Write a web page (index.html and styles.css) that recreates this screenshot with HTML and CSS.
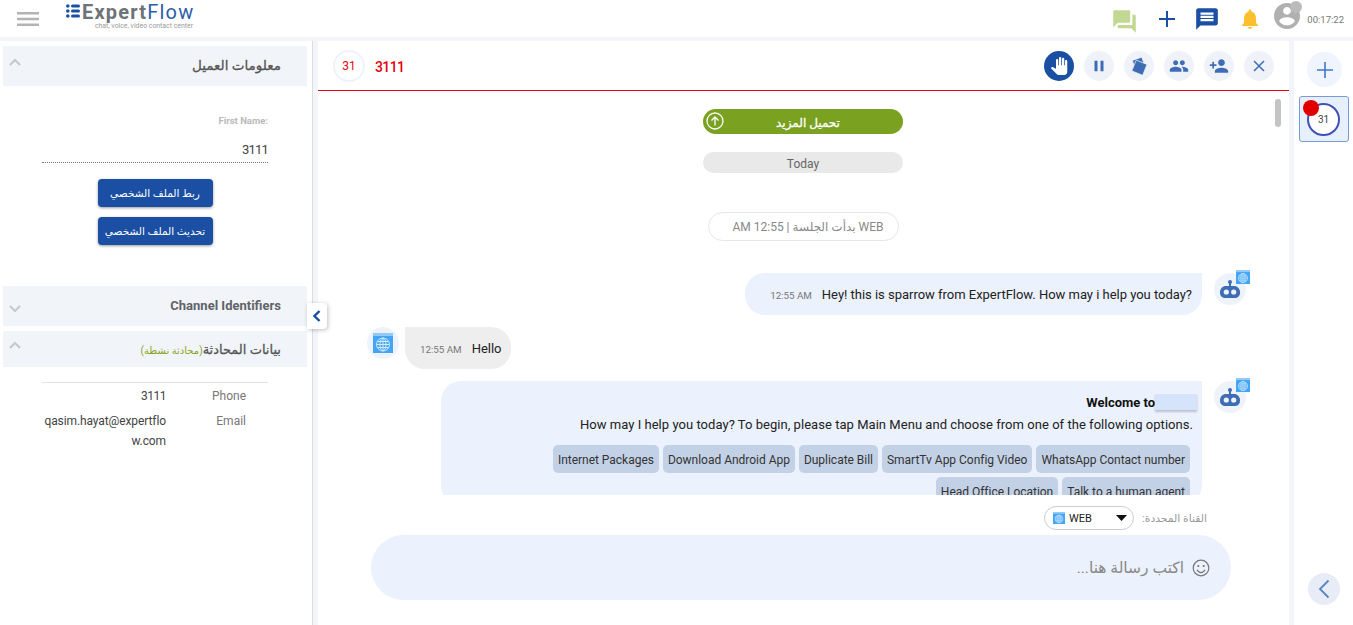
FILE: index.html
```html
<!DOCTYPE html>
<html lang="ar">
<head>
<meta charset="utf-8">
<title>ExpertFlow</title>
<link rel="stylesheet" href="styles.css">
</head>
<body>
<svg class="defs" width="0" height="0" aria-hidden="true">
  <symbol id="web" viewBox="0 0 20 20">
    <rect width="20" height="20" fill="#42a5f5"/>
    <rect width="20" height="3" fill="#90caf9"/>
    <g fill="none" stroke="#cfe8fd" stroke-width="1">
      <circle cx="10" cy="11.5" r="6.5"/>
      <ellipse cx="10" cy="11.5" rx="3" ry="6.5"/>
      <path d="M10 5v13M3.5 11.5h13M4.5 8.5h11M4.5 14.500h11"/>
    </g>
  </symbol>
  <symbol id="robot" viewBox="0 0 20 18">
    <circle cx="10" cy="2" r="2"/>
    <rect x="9" y="2" width="2" height="5"/>
    <path d="M6 6h8c3.300 0 6 2.700 6 6v1c0 2.800-2.200 5-5 5H5c-2.800 0-5-2.200-5-5v-1c0-3.300 2.700-6 6-6z"/>
    <circle cx="6.300" cy="12" r="2.600" fill="#eef3fb"/>
    <circle cx="13.700" cy="12" r="2.600" fill="#eef3fb"/>
  </symbol>
</svg>

<header class="topbar">
  <svg class="menu-icon" viewBox="0 0 22 14" width="22" height="14"><path d="M0 0h22v2.500H0zM0 5.800h22v2.500H0zM0 11.500h22V14H0z"/></svg>
  <div class="logo">
    <div class="logo-main">
      <svg class="logo-dots" viewBox="0 0 14 14" width="14" height="14"><circle cx="1.800" cy="2" r="1.800"/><circle cx="1.800" cy="7" r="1.800"/><circle cx="1.800" cy="12" r="1.800"/><rect x="5" y=".5" width="9" height="3" rx="1.500"/><rect x="5" y="5.500" width="9" height="3" rx="1.500"/><rect x="5" y="10.500" width="9" height="3" rx="1.500"/></svg>
      <span class="logo-text"><span class="logo-grey">Expert</span><span class="logo-blue">Flow</span></span>
    </div>
    <div class="logo-tag">chat, voice, video contact center</div>
  </div>
  <div class="top-actions">
    <svg class="ic-forum" viewBox="0 0 24 24" width="27" height="27"><path d="M21 6h-2v9H6v2c0 .55.45 1 1 1h11l4 4V7c0-.55-.45-1-1-1zm-4 6V3c0-.55-.45-1-1-1H3c-.55 0-1 .45-1 1v14l4-4h10c.55 0 1-.45 1-1z"/></svg>
    <svg class="ic-plus" viewBox="0 0 16 16" width="16" height="16"><path d="M7 0h2v7h7v2H9v7H7V9H0V7h7z"/></svg>
    <svg class="ic-chat" viewBox="0 0 24 24" width="26" height="26"><path d="M20 2H4c-1.100 0-1.990.9-1.990 2L2 22l4-4h14c1.100 0 2-.9 2-2V4c0-1.100-.9-2-2-2zM18 14H6v-2h12v2zm0-3H6V9h12v2zm0-3H6V6h12v2z"/></svg>
    <svg class="ic-bell" viewBox="0 0 24 24" width="24" height="24"><path d="M12 22c1.100 0 2-.9 2-2h-4c0 1.100.89 2 2 2zm6-6v-5c0-3.070-1.640-5.640-4.500-6.320V4c0-.83-.67-1.500-1.500-1.500s-1.500.67-1.500 1.500v.68C7.630 5.360 6 7.920 6 11v5l-2 2v1h16v-1l-2-2z"/></svg>
    <div class="profile">
      <svg class="ic-user" viewBox="2 2 20 20" width="26" height="26"><path d="M12 2C6.480 2 2 6.480 2 12s4.480 10 10 10 10-4.480 10-10S17.520 2 12 2zm0 3c1.660 0 3 1.340 3 3s-1.340 3-3 3-3-1.340-3-3 1.340-3 3-3zm0 14.200c-2.500 0-4.710-1.280-6-3.220.03-1.990 4-3.080 6-3.080 1.990 0 5.970 1.090 6 3.080-1.290 1.940-3.500 3.220-6 3.220z"/></svg>
      <span class="status-dot"></span>
    </div>
    <span class="clock">00:17:22</span>
  </div>
</header>

<div class="layout">
  <aside class="left">
    <section class="acc-head acc-first">
      <svg class="chev" viewBox="0 0 12 8" width="12" height="8"><path d="M1 7l5-5 5 5"/></svg>
      <h2>معلومات العميل</h2>
    </section>
    <div class="form">
      <div class="form-label">First Name:</div>
      <div class="form-value">3111</div>
      <button class="btn">ربط الملف الشخصي</button>
      <button class="btn">تحديث الملف الشخصي</button>
    </div>
    <section class="acc-head">
      <svg class="chev chev-down" viewBox="0 0 12 8" width="12" height="8"><path d="M1 1l5 5 5-5"/></svg>
      <h2 class="h-en">Channel Identifiers</h2>
    </section>
    <section class="acc-head acc-chat">
      <svg class="chev" viewBox="0 0 12 8" width="12" height="8"><path d="M1 7l5-5 5 5"/></svg>
      <h2>بيانات المحادثة<small>(محادثة نشطة)</small></h2>
    </section>
    <div class="info">
      <div class="info-row"><span class="info-val info-num">3111</span><span class="info-key">Phone</span></div>
      <div class="info-row"><span class="info-val">qasim.hayat@expertflow.com</span><span class="info-key">Email</span></div>
    </div>
    <button class="collapse" aria-label="collapse"><svg viewBox="0 0 8 12" width="8" height="12"><path d="M6.500 1L1.500 6l5 5"/></svg></button>
  </aside>

  <main class="center">
    <div class="chat-head">
      <div class="head-avatar">31</div>
      <div class="head-name">3111</div>
      <div class="head-actions">
        <span class="act act-hand"><svg viewBox="0 0 24 24" width="18" height="18"><path d="M23 5.500V20c0 2.200-1.800 4-4 4h-7.300c-1.080 0-2.100-.43-2.850-1.190L1 14.830s1.260-1.230 1.300-1.250c.22-.19.49-.29.79-.29.22 0 .42.06.6.16.04.01 4.310 2.460 4.310 2.460V4c0-.83.67-1.500 1.500-1.500S11 3.170 11 4v7h1V1.500c0-.83.67-1.500 1.500-1.500S15 .67 15 1.500V11h1V2.500c0-.83.67-1.500 1.500-1.500s1.500.67 1.500 1.500V11h1V5.500c0-.83.67-1.500 1.500-1.500s1.500.67 1.500 1.500z"/></svg></span>
        <span class="act"><svg viewBox="0 0 24 24" width="18" height="18"><path d="M6 19h4V5H6v14zm8-14v14h4V5h-4z"/></svg></span>
        <span class="act"><svg class="notes" viewBox="0 0 24 24" width="20" height="20"><rect x="6" y="3" width="12" height="13" rx="1" transform="rotate(-20 12 10)"/><rect x="5.500" y="7" width="14" height="14" rx="1" transform="rotate(22 12.500 14)"/></svg></span>
        <span class="act"><svg viewBox="0 0 24 24" width="20" height="20"><path d="M16 11c1.660 0 2.990-1.340 2.990-3S17.660 5 16 5c-1.660 0-3 1.340-3 3s1.340 3 3 3zm-8 0c1.660 0 2.990-1.340 2.990-3S9.660 5 8 5C6.340 5 5 6.340 5 8s1.340 3 3 3zm0 2c-2.330 0-7 1.170-7 3.500V19h14v-2.500c0-2.330-4.670-3.500-7-3.500zm8 0c-.29 0-.62.02-.97.05 1.160.84 1.970 1.970 1.970 3.450V19h6v-2.500c0-2.330-4.670-3.500-7-3.500z"/></svg></span>
        <span class="act"><svg viewBox="0 0 24 24" width="20" height="20"><path d="M15 12c2.210 0 4-1.790 4-4s-1.790-4-4-4-4 1.790-4 4 1.790 4 4 4zm-9-2V7H4v3H1v2h3v3h2v-3h3v-2H6zm9 4c-2.670 0-8 1.340-8 4v2h16v-2c0-2.660-5.330-4-8-4z"/></svg></span>
        <span class="act"><svg class="stroke" viewBox="0 0 12 12" width="12" height="12"><path d="M1 1l10 10M11 1L1 11"/></svg></span>
      </div>
    </div>

    <div class="messages">
      <span class="scroll-thumb"></span>
      <div class="load-more">
        <svg viewBox="0 0 18 18" width="18" height="18"><circle cx="9" cy="9" r="8"/><path d="M9 13.500V5M5.500 8.500L9 5l3.500 3.500"/></svg>
        <span>تحميل المزيد</span>
      </div>
      <div class="today">Today</div>
      <div class="session">AM 12:55 | بدأت الجلسة WEB</div>

      <div class="row row-bot row-hey">
        <div class="bubble bubble-bot">
          <span class="time">12:55 AM</span><span class="text">Hey! this is sparrow from ExpertFlow. How may i help you today?</span>
        </div>
        <div class="avatar"><svg class="robot"><use href="#robot"/></svg><svg class="badge"><use href="#web"/></svg></div>
      </div>

      <div class="row row-user">
        <div class="avatar"><svg class="web-big"><use href="#web"/></svg></div>
        <div class="bubble bubble-user">
          <span class="time">12:55 AM</span><span class="text">Hello</span>
        </div>
      </div>

      <div class="row row-bot row-menu">
        <div class="bubble bubble-bot bubble-menu">
          <div class="welcome"><strong>Welcome to</strong><span class="blank"></span></div>
          <div class="intro">How may I help you today? To begin, please tap Main Menu and choose from one of the following options.</div>
          <div class="options">
            <span class="opt">Internet Packages</span>
            <span class="opt">Download Android App</span>
            <span class="opt">Duplicate Bill</span>
            <span class="opt">SmartTv App Config Video</span>
            <span class="opt">WhatsApp Contact number</span>
            <span class="opt">Head Office Location</span>
            <span class="opt">Talk to a human agent</span>
          </div>
        </div>
        <div class="avatar"><svg class="robot"><use href="#robot"/></svg><svg class="badge"><use href="#web"/></svg></div>
      </div>
    </div>

    <div class="channel">
      <div class="select">
        <svg class="select-web"><use href="#web"/></svg>
        <span class="select-text">WEB</span>
        <svg class="caret" viewBox="0 0 11 6" width="11" height="6"><path d="M0 0h11L5.500 6z"/></svg>
      </div>
      <span class="channel-label">:القناة المحددة</span>
    </div>

    <div class="composer">
      <span class="placeholder">اكتب رسالة هنا...</span>
      <svg class="smile" viewBox="0 0 18 18" width="18" height="18"><circle cx="9" cy="9" r="7.800"/><circle cx="6.300" cy="7" r="1.100" class="eye"/><circle cx="11.700" cy="7" r="1.100" class="eye"/><path d="M5 10.800c1 2 2.500 2.800 4 2.800s3-.8 4-2.800"/></svg>
    </div>
  </main>

  <aside class="right">
    <button class="add-chat" aria-label="add"><svg viewBox="0 0 16 16" width="16" height="16"><path d="M7.200 0h1.600v7.200H16v1.600H8.800V16H7.200V8.800H0V7.200h7.200z"/></svg></button>
    <div class="chat-card">
      <span class="card-ring">31</span>
      <span class="card-dot"></span>
    </div>
    <button class="side-back" aria-label="back"><svg viewBox="0 0 12 20" width="12" height="20"><path d="M10.500 1.500L2 10l8.500 8.500"/></svg></button>
  </aside>
</div>
</body>
</html>
```

FILE: styles.css
```css
* { box-sizing: border-box; }
html, body { margin: 0; height: 625px; overflow: hidden; }
body { font-family: Roboto, "DejaVu Sans", sans-serif; background: #fff; color: #222; }
.defs { position: absolute; }
button { font-family: inherit; border: 0; padding: 0; cursor: pointer; }

.topbar { height: 37px; display: flex; align-items: flex-start; background: #fff; }
.menu-icon { fill: #b3b3b3; margin: 12px 0 0 17px; flex: none; }
.logo { margin-left: 27px; width: 128px; }
.logo-main { display: flex; align-items: flex-start; height: 22px; }
.logo-dots { fill: #1a4fa3; margin-top: 4px; flex: none; }
.logo-text { font-size: 20px; line-height: 24px; letter-spacing: 1.200px; margin-left: 2px; white-space: nowrap; }
.logo-grey { color: #6e7378; font-weight: 700; }
.logo-blue { color: #2c5ea8; font-weight: 400; }
.logo-tag { font-size: 6.900px; line-height: 9px; color: #9a9a9a; text-align: right; white-space: nowrap; margin-right: 1px; }
.top-actions { margin-left: auto; display: flex; align-items: flex-start; padding-right: 9px; }
.ic-forum { fill: #c2d791; margin-top: 8px; }
.ic-plus { fill: #1a4fa3; margin: 11px 0 0 21px; }
.ic-chat { fill: #1a4fa3; margin: 6px 0 0 19px; }
.ic-bell { fill: #fbc02d; margin: 7px 0 0 18px; }
.profile { position: relative; margin: 3px 0 0 12px; width: 26px; height: 26px; }
.ic-user { fill: #b0b0b0; display: block; }
.status-dot { position: absolute; right: -2px; top: -2px; width: 12px; height: 12px; border-radius: 50%; background: #bbb; }
.clock { font-size: 9.500px; color: #777; margin: 14px 0 0 7px; line-height: 12px; }

.layout { height: 588px; display: flex; border-top: 4px solid #f3f5fa; }

.left { position: relative; width: 318px; flex: none; padding: 5px 5px 0 3px; border-right: 5px solid #f3f5fa; box-shadow: inset -6px 0 0 -5px #ddd; }
.acc-head { width: 304px; height: 40px; background: #f1f5f9; display: flex; align-items: center; justify-content: space-between; padding: 0 26px 0 6px; margin-bottom: 5px; }
.acc-first { margin-bottom: 0; }
.acc-first h2 { margin-top: -2px; }
.acc-chat { height: 36px; margin-bottom: 0; }
.acc-head h2 { font-size: 13.500px; font-weight: 400; -webkit-text-stroke: .3px #555; color: #555; direction: rtl; white-space: nowrap; }
.acc-chat h2 { font-size: 13px; margin: 0; }
.acc-first h2 { margin-bottom: 0; }
.acc-head .h-en { font-size: 13px; font-weight: 700; -webkit-text-stroke: 0; color: #606368; margin: -2px 0 0; }
.acc-head small { font-size: 10px; font-weight: 400; -webkit-text-stroke: 0; color: #8aa31f; }
.chev { fill: none; stroke: #c8c8c8; stroke-width: 2; margin-top: -8px; }
.chev-down { margin-top: 6px; }

.form { height: 200px; padding: 29px 40px 0 39px; display: flex; flex-direction: column; align-items: center; }
.form-label { align-self: stretch; text-align: right; font-size: 9.500px; line-height: 12px; font-weight: 700; color: #b9b9b9; }
.form-value { align-self: stretch; text-align: right; font-size: 13px; letter-spacing: -.8px; line-height: 20px; color: #444; margin-top: 11px; border-bottom: 1px dotted #777; height: 25px; padding-top: 2px; }
.btn { width: 115px; height: 28px; margin-top: 10px; background: #1a4fa3; color: #fff; font-size: 10.500px; border-radius: 4px; box-shadow: 0 1px 3px rgba(0,0,0,.4); }
.form-value + .btn { margin-top: 16px; }

.info { margin: 15px 0 0 39px; width: 226px; border-top: 1px solid #dfe1ea; padding-top: 3px; }
.info-row { display: grid; grid-template-columns: 124px 80px; font-size: 12px; line-height: 20px; margin-bottom: 5px; }
.info-val { text-align: right; word-break: break-all; color: #444; letter-spacing: -.1px; }
.info-num { letter-spacing: -.5px; }
.info-key { text-align: right; color: #777; }
.collapse { position: absolute; left: 307px; top: 262px; width: 20px; height: 26px; background: #fff; border-radius: 0 4px 4px 0; box-shadow: 1px 1px 4px rgba(0,0,0,.25); display: flex; align-items: center; justify-content: center; z-index: 2; }
.collapse svg { fill: none; stroke: #1a4fa3; stroke-width: 2.400; }

.center { width: 971px; flex: none; display: flex; flex-direction: column; background: #fff; }
.chat-head { height: 50px; border-bottom: 1px solid #e8000b; display: flex; align-items: center; padding: 1px 15px 0; flex: none; }
.head-avatar { width: 32px; height: 32px; border-radius: 50%; border: 2px solid #edf2fc; color: #e8000b; font-size: 12px; display: flex; align-items: center; justify-content: center; }
.head-name { margin: 1px 0 0 10px; color: #e8000b; font-size: 14px; letter-spacing: -.6px; font-weight: 500; }
.head-actions { margin-left: auto; display: flex; gap: 10px; }
.act { width: 30px; height: 30px; border-radius: 50%; background: #eff2f8; display: flex; align-items: center; justify-content: center; }
.act svg { fill: #3f6db5; }
.act svg.stroke { fill: none; stroke: #3f6db5; stroke-width: 1.500; }
.act svg.notes rect { stroke: #eff2f8; stroke-width: .8; }
.act-hand { background: #1a4fa3; }
.act-hand svg { fill: #fff; }

.messages { position: relative; height: 404px; flex: none; overflow: hidden; display: flex; flex-direction: column; align-items: center; padding: 18px 1px 0 0; }
.scroll-thumb { position: absolute; left: 957px; top: 8px; width: 6px; height: 28px; border-radius: 3px; background: #c4c4c4; }
.load-more { position: relative; width: 200px; height: 25px; border-radius: 13px; background: #7aa11f; color: #fff; font-size: 12px; -webkit-text-stroke: .3px #fff; padding: 2px 0 0 10px; display: flex; align-items: center; justify-content: center; flex: none; }
.load-more svg { position: absolute; left: 3px; top: 3px; fill: none; stroke: #fff; stroke-width: 1.300; }
.today { width: 200px; height: 21px; margin-top: 18px; border-radius: 11px; background: #e9e9e9; color: #666; font-size: 12px; line-height: 24px; text-align: center; flex: none; }
.session { width: 191px; height: 29px; margin-top: 39px; padding-left: 10px; border: 1px solid #e6e6e6; border-radius: 15px; color: #888; font-size: 12px; line-height: 28px; text-align: center; flex: none; white-space: nowrap; direction: ltr; }

.row { align-self: stretch; display: flex; align-items: flex-start; flex: none; }
.row-bot { justify-content: flex-end; padding-right: 42px; gap: 12px; }
.row-hey { margin-top: 32px; }
.row-user { padding-left: 49px; gap: 6px; margin-top: 12px; }
.row-menu { margin-top: 12px; }
.avatar { position: relative; width: 32px; height: 32px; border-radius: 50%; background: #eef3fb; display: flex; align-items: center; justify-content: center; flex: none; }
.robot { width: 20px; height: 18px; fill: #3f6db5; }
.badge { position: absolute; right: -4px; top: -3px; width: 14px; height: 14px; }
.web-big { width: 20px; height: 20px; }
.bubble { height: 42px; padding: 0 10px 0 25px; display: flex; align-items: center; gap: 10px; font-size: 13px; letter-spacing: -.02px; color: #222; white-space: nowrap; }
.bubble-bot { background: #ebf1fd; border-radius: 20px 0 20px 20px; }
.bubble-user { background: #eee; border-radius: 0 20px 20px 20px; padding: 0 10px 0 15px; }
.time { font-size: 9.800px; color: #777; margin-top: 3px; }
.bubble-menu { display: block; width: 761px; height: auto; padding: 13px 9px 0 0; white-space: normal; text-align: right; }
.welcome { display: flex; justify-content: flex-end; align-items: flex-start; height: 16px; margin-right: -4px; }
.welcome strong { font-size: 13px; line-height: 18px; color: #111; }
.blank { width: 42px; height: 16px; background: #d5e3fb; box-shadow: 0 2px 2px rgba(0,0,0,.2); }
.intro { margin-top: 7px; line-height: 16px; font-size: 13px; letter-spacing: .04px; }
.options { display: flex; flex-wrap: wrap; justify-content: flex-end; gap: 4px; margin-top: 12px; padding-right: 3px; }
.opt { height: 28px; line-height: 30px; padding: 0 5px; background: #c3d1e6; border-radius: 5px; font-size: 12px; color: #333; white-space: nowrap; }

.channel { height: 40px; flex: none; display: flex; align-items: center; padding: 6px 82px 0 0; justify-content: flex-end; gap: 8px; }
.select { width: 90px; height: 24px; border: 1px solid #ccc; border-radius: 12px; display: flex; align-items: center; padding: 0 6px 0 8px; }
.select-web { width: 12px; height: 12px; flex: none; }
.select-text { font-size: 11px; color: #222; margin-left: 4px; }
.caret { margin-left: auto; fill: #111; }
.channel-label { font-size: 10.800px; color: #999; direction: ltr; }

.composer { margin: 0 0 0 53px; width: 860px; height: 65px; border-radius: 33px; background: #ebf1fd; display: flex; align-items: center; justify-content: flex-end; gap: 8px; padding-right: 21px; flex: none; }
.placeholder { font-size: 15.500px; color: #888; direction: rtl; }
.smile { fill: none; stroke: #777; stroke-width: 1.200; }
.smile .eye { fill: #777; stroke: none; }

.right { flex: none; width: 64px; border-left: 5px solid #f3f5fa; display: flex; flex-direction: column; align-items: center; padding-top: 11px; }
.add-chat { width: 35px; height: 35px; border-radius: 50%; background: #eff4fd; display: flex; align-items: center; justify-content: center; flex: none; margin-left: 2px; }
.add-chat svg { fill: #3f78d0; }
.chat-card { position: relative; width: 50px; height: 46px; margin-top: 9px; background: #e8effc; border: 1px solid #7a9ad6; border-radius: 3px; display: flex; align-items: center; justify-content: center; flex: none; }
.card-ring { width: 33px; height: 33px; border-radius: 50%; border: 2px solid #3f51b5; background: #fff; display: flex; align-items: center; justify-content: center; font-size: 10px; color: #444; }
.card-dot { position: absolute; left: 3px; top: 3px; width: 16px; height: 16px; border-radius: 50%; background: #e00000; }
.side-back { width: 32px; height: 32px; border-radius: 50%; background: #e7ecf6; margin-top: 431px; margin-left: 1px; display: flex; align-items: center; justify-content: center; flex: none; }
.side-back svg { fill: none; stroke: #5a84c4; stroke-width: 1.800; }
```
